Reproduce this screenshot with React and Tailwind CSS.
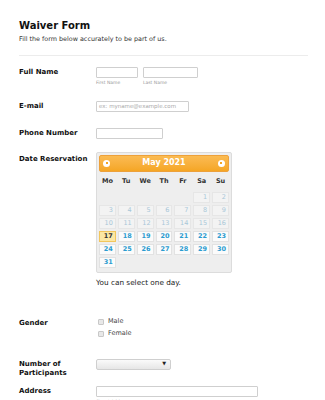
import React from "react";

const font = { fontFamily: '"DejaVu Sans", Verdana, sans-serif' };

const Label = ({ children }) => (
  <div className="w-[77px] shrink-0 text-[7px] font-bold text-[#111] leading-[9px]">{children}</div>
);

const Box = ({ w, placeholder }) => (
  <div className={`h-[11px] ${w} border border-[#cfcfcf] bg-white rounded-[1px] text-[5.5px] text-[#aaa] leading-[9px] pl-[2px]`}>
    {placeholder}
  </div>
);

const Calendar = () => {
  const days = ["Mo", "Tu", "We", "Th", "Fr", "Sa", "Su"];
  const cells = [];
  for (let i = 0; i < 5; i++) cells.push(null);
  for (let d = 1; d <= 31; d++) cells.push(d);

  return (
    <div className="w-[136px] border border-[#dcdcdc] bg-[#eeeeee] rounded-[2px] p-[2px] pb-[4px]">
      <div className="h-[17px] rounded-[2px] bg-gradient-to-b from-[#fbbb52] to-[#f5a623] border border-[#eda13b] flex items-center justify-between px-[3px]">
        <span className="w-[7px] h-[7px] rounded-full bg-white flex items-center justify-center">
          <span className="w-[2px] h-[2px] bg-[#f5a623]" />
        </span>
        <span className="text-[8px] font-bold text-white">May 2021</span>
        <span className="w-[7px] h-[7px] rounded-full bg-white flex items-center justify-center">
          <span className="w-[2px] h-[2px] bg-[#f5a623]" />
        </span>
      </div>
      <div className="grid grid-cols-7 gap-x-[2px] mt-[3px] mb-[5px]">
        {days.map((d) => (
          <div key={d} className="text-center text-[6.5px] font-bold text-[#333] leading-[12px]">{d}</div>
        ))}
      </div>
      <div className="grid grid-cols-7 gap-[2px]">
        {cells.map((d, i) => {
          if (d === null) return <div key={i} className="h-[11px]" />;
          const past = d < 17;
          const today = d === 17;
          return (
            <div
              key={i}
              className={`h-[11px] border text-right pr-[2px] text-[6.5px] leading-[9px] ${
                today
                  ? "bg-[#fbe7a4] border-[#f2c65c] text-[#333] font-bold"
                  : past
                  ? "bg-[#f3f3f3] border-[#e6e6e6] text-[#a9c7d8]"
                  : "bg-[#fbfbfb] border-[#e2e2e2] text-[#2b9cd0] font-bold"
              }`}
            >
              {d}
            </div>
          );
        })}
      </div>
    </div>
  );
};

const Radio = ({ label }) => (
  <div className="flex items-center gap-[4px] h-[12px]">
    <span className="w-[6px] h-[6px] rounded-[1px] border border-[#c8c8c8] bg-[#e8e8e8] ml-[2px]" />
    <span className="text-[6.5px] text-[#444]">{label}</span>
  </div>
);

export default function App() {
  return (
    <div className="w-[325px] h-[400px] bg-white overflow-hidden" style={font}>
      <div className="px-[19px] pt-[19px]">
        <div className="text-[10px] font-bold text-[#111] leading-[13px]">Waiver Form</div>
        <div className="text-[6.4px] text-[#333] mt-[3px] leading-[9px]">Fill the form below accurately to be part of us.</div>
        <div className="h-px bg-[#ececec] mt-[11px] mr-[-2px]" />

        <div className="flex mt-[11px]">
          <Label><div className="pt-[1px]">Full Name</div></Label>
          <div className="flex gap-[5px]">
            <div>
              <Box w="w-[42px]" />
              <div className="text-[4.5px] text-[#999] mt-[2px]">First Name</div>
            </div>
            <div>
              <Box w="w-[55px]" />
              <div className="text-[4.5px] text-[#999] mt-[2px]">Last Name</div>
            </div>
          </div>
        </div>

        <div className="flex mt-[14px]">
          <Label><div className="pt-[1px]">E-mail</div></Label>
          <Box w="w-[93px]" placeholder="ex: myname@example.com" />
        </div>

        <div className="flex mt-[16px]">
          <Label><div className="pt-[1px]">Phone Number</div></Label>
          <Box w="w-[67px]" />
        </div>

        <div className="flex mt-[13px]">
          <Label><div className="pt-[3px]">Date Reservation</div></Label>
          <div>
            <Calendar />
            <div className="text-[7.3px] text-[#222] mt-[5px]">You can select one day.</div>
          </div>
        </div>

        <div className="flex mt-[27px]">
          <Label><div className="pt-[3px]">Gender</div></Label>
          <div>
            <Radio label="Male" />
            <Radio label="Female" />
          </div>
        </div>

        <div className="flex mt-[19px]">
          <Label><div className="pt-[1px]">Number of<br />Participants</div></Label>
          <div className="h-[11px] w-[75px] border border-[#cfcfcf] rounded-[2px] bg-gradient-to-b from-[#fafafa] to-[#e6e6e6] flex items-center justify-end pr-[4px]">
            <span className="text-[5px] text-[#222]">▼</span>
          </div>
        </div>

        <div className="flex mt-[8px]">
          <Label><div className="pt-[1px]">Address</div></Label>
          <div>
            <Box w="w-[162px]" />
            <div className="text-[4.5px] text-[#999] mt-[2px]">Street Address</div>
          </div>
        </div>
      </div>
    </div>
  );
}
